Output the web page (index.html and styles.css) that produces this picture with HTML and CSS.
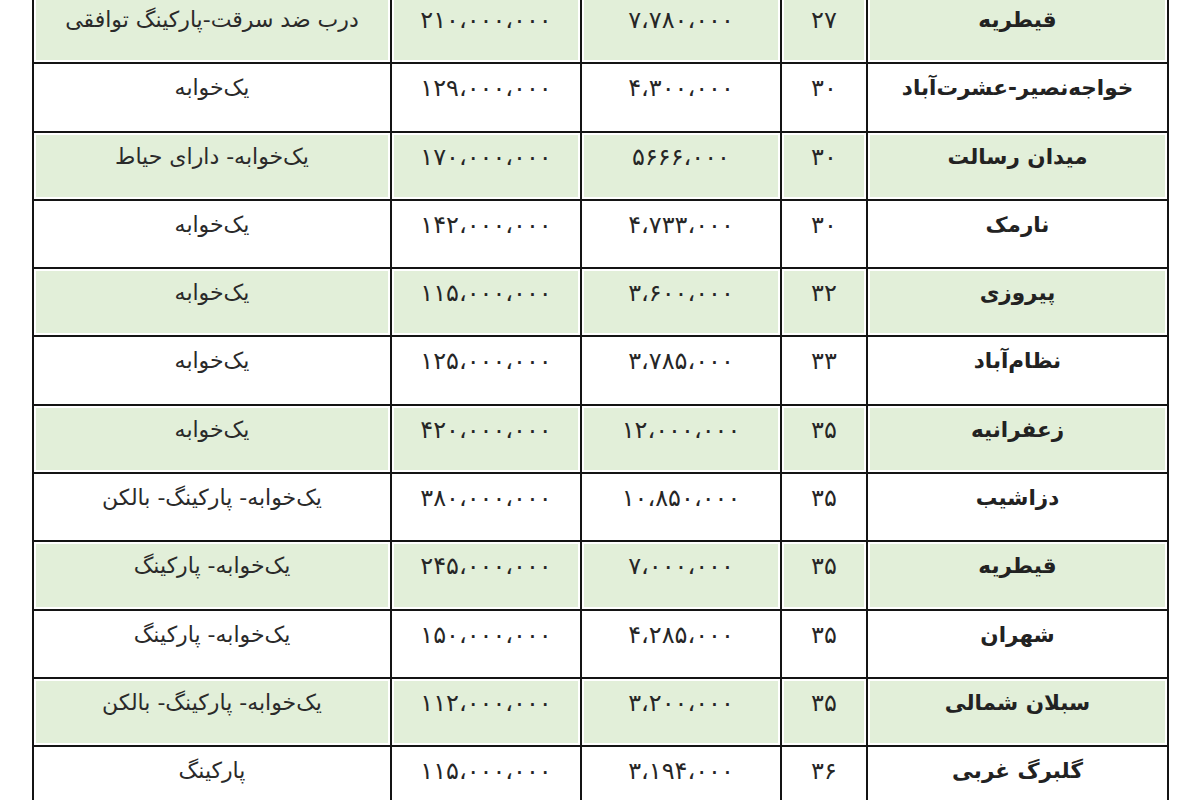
FILE: index.html
```html
<!DOCTYPE html>
<html lang="fa" dir="rtl">
<head>
<meta charset="utf-8">
<title>قیمت آپارتمان</title>
<link rel="stylesheet" href="styles.css">
</head>
<body>
<table class="prices">
  <colgroup>
    <col class="c-name"><col class="c-area"><col class="c-meter"><col class="c-total"><col class="c-desc">
  </colgroup>
  <tbody>
    <tr class="alt"><td class="name">قیطریه</td><td class="num">۲۷</td><td class="num">۷،۷۸۰،۰۰۰</td><td class="num">۲۱۰،۰۰۰،۰۰۰</td><td class="desc">درب ضد سرقت-پارکینگ توافقی</td></tr>
    <tr><td class="name">خواجه‌نصیر-عشرت‌آباد</td><td class="num">۳۰</td><td class="num">۴،۳۰۰،۰۰۰</td><td class="num">۱۲۹،۰۰۰،۰۰۰</td><td class="desc">یک‌خوابه</td></tr>
    <tr class="alt"><td class="name">میدان رسالت</td><td class="num">۳۰</td><td class="num">۵۶۶۶،۰۰۰</td><td class="num">۱۷۰،۰۰۰،۰۰۰</td><td class="desc">یک‌خوابه- دارای حیاط</td></tr>
    <tr><td class="name">نارمک</td><td class="num">۳۰</td><td class="num">۴،۷۳۳،۰۰۰</td><td class="num">۱۴۲،۰۰۰،۰۰۰</td><td class="desc">یک‌خوابه</td></tr>
    <tr class="alt"><td class="name">پیروزی</td><td class="num">۳۲</td><td class="num">۳،۶۰۰،۰۰۰</td><td class="num">۱۱۵،۰۰۰،۰۰۰</td><td class="desc">یک‌خوابه</td></tr>
    <tr><td class="name">نظام‌آباد</td><td class="num">۳۳</td><td class="num">۳،۷۸۵،۰۰۰</td><td class="num">۱۲۵،۰۰۰،۰۰۰</td><td class="desc">یک‌خوابه</td></tr>
    <tr class="alt"><td class="name">زعفرانیه</td><td class="num">۳۵</td><td class="num">۱۲،۰۰۰،۰۰۰</td><td class="num">۴۲۰،۰۰۰،۰۰۰</td><td class="desc">یک‌خوابه</td></tr>
    <tr><td class="name">دزاشیب</td><td class="num">۳۵</td><td class="num">۱۰،۸۵۰،۰۰۰</td><td class="num">۳۸۰،۰۰۰،۰۰۰</td><td class="desc">یک‌خوابه- پارکینگ- بالکن</td></tr>
    <tr class="alt"><td class="name">قیطریه</td><td class="num">۳۵</td><td class="num">۷،۰۰۰،۰۰۰</td><td class="num">۲۴۵،۰۰۰،۰۰۰</td><td class="desc">یک‌خوابه- پارکینگ</td></tr>
    <tr><td class="name">شهران</td><td class="num">۳۵</td><td class="num">۴،۲۸۵،۰۰۰</td><td class="num">۱۵۰،۰۰۰،۰۰۰</td><td class="desc">یک‌خوابه- پارکینگ</td></tr>
    <tr class="alt"><td class="name">سبلان شمالی</td><td class="num">۳۵</td><td class="num">۳،۲۰۰،۰۰۰</td><td class="num">۱۱۲،۰۰۰،۰۰۰</td><td class="desc">یک‌خوابه- پارکینگ- بالکن</td></tr>
    <tr><td class="name">گلبرگ غربی</td><td class="num">۳۶</td><td class="num">۳،۱۹۴،۰۰۰</td><td class="num">۱۱۵،۰۰۰،۰۰۰</td><td class="desc">پارکینگ</td></tr>
  </tbody>
</table>
</body>
</html>
```

FILE: styles.css
```css
html, body {
  margin: 0;
  padding: 0;
  background: #ffffff;
}
body {
  overflow: hidden;
  font-family: "DejaVu Sans", "Noto Sans", sans-serif;
  color: #222222;
}
.prices {
  border-collapse: collapse;
  table-layout: fixed;
  width: 1137px;
  margin: -6px 31px 0 32px;
  direction: rtl;
}
.c-name { width: 301px; }
.c-area { width: 86px; }
.c-meter { width: 200px; }
.c-total { width: 190px; }
.c-desc { width: 358px; }
.prices tr {
  height: 68.3px;
}
.prices td {
  border: 2px solid #141414;
  text-align: center;
  vertical-align: top;
  padding: 11px 2px 0 2px;
  font-size: 21px;
  line-height: 26px;
  white-space: nowrap;
}
.prices tr.alt td {
  background: #e2efd9;
  box-shadow: inset 0 0 0 2px #ffffff;
}
.prices td.name {
  font-weight: bold;
  font-size: 21.5px;
}
.prices td.num {
  direction: ltr;
  font-size: 24px;
  color: #262626;
}
.prices td.desc {
  font-size: 22px;
  color: #2a2a2a;
}
```
